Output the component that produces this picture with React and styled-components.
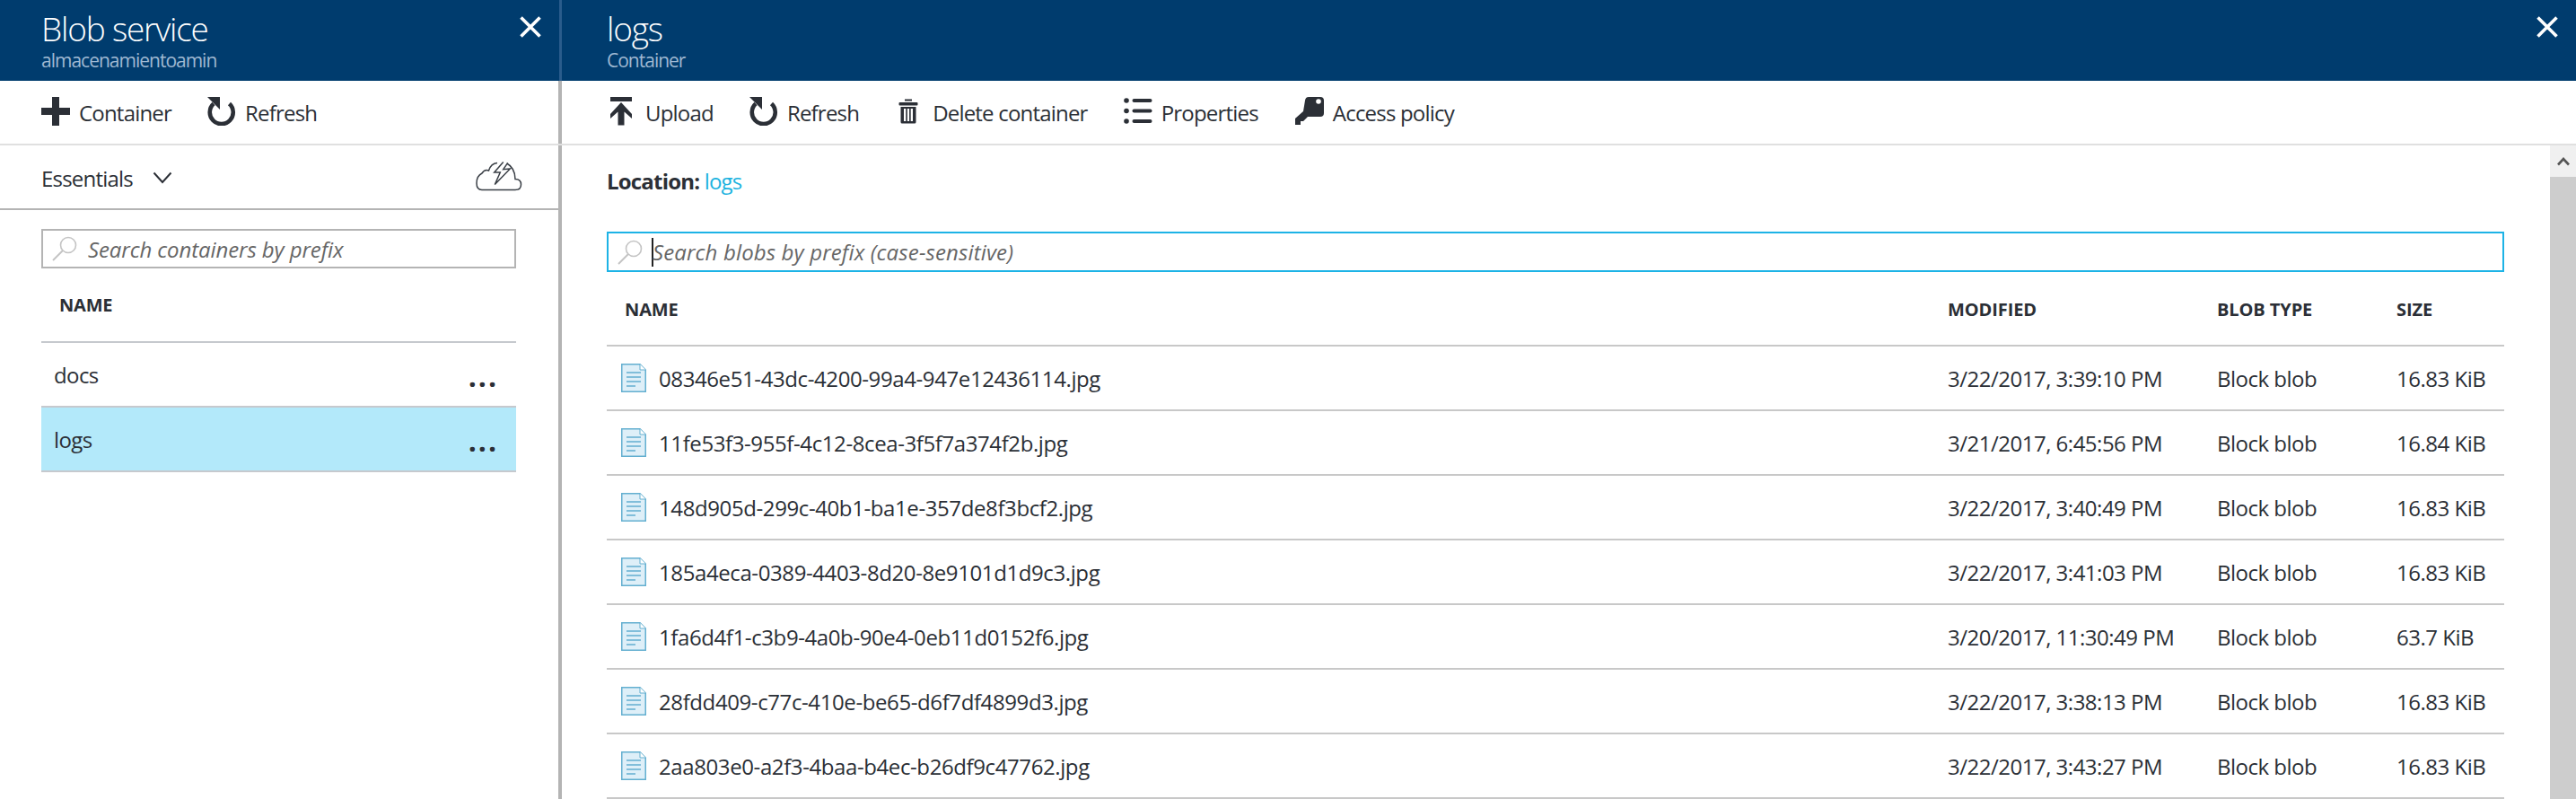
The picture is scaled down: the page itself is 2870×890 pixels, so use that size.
import React from 'react';
import styled, { createGlobalStyle } from 'styled-components';

const GlobalStyle = createGlobalStyle`
    html, body {
        margin: 0;
        padding: 0;
        background: #fff;
    }
    * {
        box-sizing: border-box;
    }
    body {
        font-family: 'Open Sans', 'Liberation Sans', sans-serif;
        color: #2b2f36;
    }
`;

const blobs = [
    ['08346e51-43dc-4200-99a4-947e12436114.jpg', '3/22/2017, 3:39:10 PM', '16.83 KiB'],
    ['11fe53f3-955f-4c12-8cea-3f5f7a374f2b.jpg', '3/21/2017, 6:45:56 PM', '16.84 KiB'],
    ['148d905d-299c-40b1-ba1e-357de8f3bcf2.jpg', '3/22/2017, 3:40:49 PM', '16.83 KiB'],
    ['185a4eca-0389-4403-8d20-8e9101d1d9c3.jpg', '3/22/2017, 3:41:03 PM', '16.83 KiB'],
    ['1fa6d4f1-c3b9-4a0b-90e4-0eb11d0152f6.jpg', '3/20/2017, 11:30:49 PM', '63.7 KiB'],
    ['28fdd409-c77c-410e-be65-d6f7df4899d3.jpg', '3/22/2017, 3:38:13 PM', '16.83 KiB'],
    ['2aa803e0-a2f3-4baa-b4ec-b26df9c47762.jpg', '3/22/2017, 3:43:27 PM', '16.83 KiB'],
];

function CloseIcon() {
    return (
        <svg width="24" height="24" viewBox="0 0 24 24">
            <path d="M1.5 1.5 L22.5 22.5 M22.5 1.5 L1.5 22.5" stroke="#fff" strokeWidth="3.6" fill="none" />
        </svg>
    );
}

function PlusIcon() {
    return (
        <svg width="32" height="32" viewBox="0 0 32 32">
            <path d="M12 0 H20 V12 H32 V20 H20 V32 H12 V20 H0 V12 H12 Z" fill="#2b2f36" />
        </svg>
    );
}

function RefreshIcon() {
    return (
        <svg width="32" height="32" viewBox="0 0 32 32">
            <path d="M24.5 7.5 A13 13 0 1 1 7 7.5" stroke="#2b2f36" strokeWidth="4.6" fill="none" />
            <path d="M0 0 H14 V14 Z" fill="#2b2f36" />
        </svg>
    );
}

function UploadIcon() {
    return (
        <svg width="28" height="32" viewBox="0 0 28 32">
            <rect x="2" y="0" width="24" height="5" fill="#2b2f36" />
            <path d="M14 6 L26 19 V24 L17.5 16.5 V31.5 H10.5 V16.5 L2 24 V19 Z" fill="#2b2f36" />
        </svg>
    );
}

function TrashIcon() {
    return (
        <svg width="24" height="28" viewBox="0 0 24 28">
            <rect x="8" y="0.5" width="8" height="2" fill="#2b2f36" />
            <rect x="1.5" y="4" width="21" height="3.5" rx="1" fill="#2b2f36" />
            <path d="M3.5 9 H20.5 V26 Q20.5 27.5 19 27.5 H5 Q3.5 27.5 3.5 26 Z M7 11 V25 H9.3 V11 Z M10.9 11 V25 H13.1 V11 Z M14.7 11 V25 H17 V11 Z" fill="#2b2f36" fillRule="evenodd" />
        </svg>
    );
}

function ListIcon() {
    return (
        <svg width="32" height="30" viewBox="0 0 32 30">
            <circle cx="3" cy="3" r="2.8" fill="#2b2f36" />
            <circle cx="3" cy="14.5" r="2.8" fill="#2b2f36" />
            <circle cx="3" cy="26" r="2.8" fill="#2b2f36" />
            <rect x="9.5" y="1" width="22" height="4" rx="2" fill="#2b2f36" />
            <rect x="9.5" y="12.5" width="22" height="4" rx="2" fill="#2b2f36" />
            <rect x="9.5" y="24" width="22" height="4" rx="2" fill="#2b2f36" />
        </svg>
    );
}

function KeyIcon() {
    return (
        <svg width="34" height="32" viewBox="0 0 34 32">
            <path d="M12 4 Q12.5 0 16 0 H29 Q33 0 33 4 V18 Q33 22 29 22 H15 L10 27 H7 V31 H1 V24 L10 16 Z" fill="#2b2f36" />
            <circle cx="27" cy="5" r="2.8" fill="#fff" />
        </svg>
    );
}

function CloudIcon() {
    return (
        <svg width="52" height="34" viewBox="0 0 52 34">
            <path d="M24 1.5 Q17 2 14.5 10 Q10 8 7 13 Q1 16 1 24 Q1 31.5 7 31.5 H44 Q50.5 31.5 50.5 25.5 Q50.5 19.5 44 19.5 Q44 7 34 1.5" stroke="#3a3f46" strokeWidth="1.5" fill="none" />
            <path d="M30.7 0.5 L20.7 12 H27.3 L21.3 25.5 L38.3 8 L30.7 8.7 L35.7 1.3" stroke="#3a3f46" strokeWidth="1.5" fill="#fff" />
        </svg>
    );
}

function SearchIcon() {
    return (
        <svg width="28" height="28" viewBox="0 0 28 28">
            <circle cx="18" cy="10" r="8.5" stroke="#c4c4c4" strokeWidth="1.6" fill="none" />
            <path d="M12 16 L1 27" stroke="#c4c4c4" strokeWidth="2" fill="none" />
        </svg>
    );
}

function FileIcon() {
    return (
        <svg width="28" height="32" viewBox="0 0 28 32">
            <path d="M0.75 0.75 H21 L27.25 7 V31.25 H0.75 Z" fill="#deeff8" stroke="#63afd0" strokeWidth="1.5" />
            <path d="M21 0.75 V7 H27.25" fill="#fff" stroke="#63afd0" strokeWidth="1" />
            <path d="M6 10 H22 M6 15 H22 M6 20 H22 M6 25 H16" stroke="#63afd0" strokeWidth="1.4" />
        </svg>
    );
}

function ToolButton({ icon, label, gap, push }) {
    return (
        <SCToolButton $gap={gap} $push={push}>
            {icon}
            <SCToolLabel>{label}</SCToolLabel>
        </SCToolButton>
    );
}

function BladeHeader({ title, subtitle, last }) {
    return (
        <SCHeader $last={last}>
            <div>
                <SCTitle>{title}</SCTitle>
                <SCSubtitle>{subtitle}</SCSubtitle>
            </div>
            <SCClose><CloseIcon /></SCClose>
        </SCHeader>
    );
}

function App() {
    return (
        <>
        <GlobalStyle />
        <SCPage>
            <SCLeftBlade>
                <BladeHeader title="Blob service" subtitle="almacenamientoamin" />
                <SCToolbar>
                    <ToolButton icon={<PlusIcon />} label="Container" gap={10} />
                    <ToolButton icon={<RefreshIcon />} label="Refresh" gap={10} />
                </SCToolbar>
                <SCEssentials>
                    <SCEssentialsLabel>
                        Essentials
                        <svg width="22" height="14" viewBox="0 0 22 14">
                            <path d="M1.5 1.5 L11 12 L20.5 1.5" stroke="#2b2f36" strokeWidth="2" fill="none" />
                        </svg>
                    </SCEssentialsLabel>
                    <CloudIcon />
                </SCEssentials>
                <SCLeftBody>
                    <SCSearch>
                        <SearchIcon />
                        <SCPlaceholder>Search containers by prefix</SCPlaceholder>
                    </SCSearch>
                    <SCListHead>NAME</SCListHead>
                    <SCListRow>
                        <span>docs</span>
                        <SCDots>...</SCDots>
                    </SCListRow>
                    <SCListRow $selected>
                        <span>logs</span>
                        <SCDots>...</SCDots>
                    </SCListRow>
                </SCLeftBody>
            </SCLeftBlade>

            <SCRightBlade>
                <BladeHeader title="logs" subtitle="Container" last />
                <SCToolbar $right>
                    <ToolButton icon={<UploadIcon />} label="Upload" gap={13} />
                    <ToolButton icon={<RefreshIcon />} label="Refresh" gap={10} />
                    <ToolButton icon={<TrashIcon />} label="Delete container" gap={15} push={3} />
                    <ToolButton icon={<ListIcon />} label="Properties" gap={10} />
                    <ToolButton icon={<KeyIcon />} label="Access policy" gap={9} />
                </SCToolbar>
                <SCRightBody>
                    <SCContent>
                        <SCLocation><b>Location:</b> <a>logs</a></SCLocation>
                        <SCSearch $focused>
                            <SearchIcon />
                            <SCCaret />
                            <SCPlaceholder $focused>Search blobs by prefix (case-sensitive)</SCPlaceholder>
                        </SCSearch>
                        <SCTable>
                            <SCTableHead>
                                <SCHeadCell $first>NAME</SCHeadCell>
                                <SCHeadCell>MODIFIED</SCHeadCell>
                                <SCHeadCell>BLOB TYPE</SCHeadCell>
                                <SCHeadCell>SIZE</SCHeadCell>
                            </SCTableHead>
                            {blobs.map(([name, modified, size]) => (
                                <SCTableRow key={name}>
                                    <SCNameCell>
                                        <FileIcon />
                                        <SCFileName>{name}</SCFileName>
                                    </SCNameCell>
                                    <SCCell>{modified}</SCCell>
                                    <SCCell>Block blob</SCCell>
                                    <SCCell>{size}</SCCell>
                                </SCTableRow>
                            ))}
                        </SCTable>
                    </SCContent>
                    <SCScrollbar>
                        <SCScrollButton>
                            <svg width="14" height="10" viewBox="0 0 14 10">
                                <path d="M1 8.5 L7 2 L13 8.5" stroke="#555" strokeWidth="2.6" fill="none" />
                            </svg>
                        </SCScrollButton>
                    </SCScrollbar>
                </SCRightBody>
            </SCRightBlade>
        </SCPage>
        </>
    );
}

const SCPage = styled.div`
    width: 2870px;
    height: 890px;
    display: flex;
    overflow: hidden;
    background-color: #fff;
`;

const SCLeftBlade = styled.div`
    width: 626px;
    height: 100%;
    flex-shrink: 0;
    display: flex;
    flex-direction: column;
    border-right: 4px solid #b4b4b4;
`;

const SCRightBlade = styled.div`
    flex: 1;
    min-width: 0;
    height: 100%;
    display: flex;
    flex-direction: column;
`;

const SCHeader = styled.div`
    height: 90px;
    flex-shrink: 0;
    background-color: #003c6e;
    display: flex;
    justify-content: space-between;
    align-items: flex-start;
    padding: 11px 20px 0 ${(p) => (p.$last ? '50px' : '46px')};
    margin-right: ${(p) => (p.$last ? '0' : '-4px')};
    border-right: ${(p) => (p.$last ? 'none' : '3px solid #2a5c8c')};
`;

const SCTitle = styled.div`
    font-size: 37px;
    font-weight: 300;
    line-height: 42px;
    color: #fff;
    letter-spacing: -1.2px;
`;

const SCSubtitle = styled.div`
    font-size: 21px;
    line-height: 28px;
    color: #9fb8d2;
    letter-spacing: -1px;
`;

const SCClose = styled.div`
    margin-top: 7px;
    display: flex;
`;

const SCToolbar = styled.div`
    height: 72px;
    flex-shrink: 0;
    display: flex;
    align-items: center;
    gap: 40px;
    padding-left: ${(p) => (p.$right ? '52px' : '46px')};
    padding-bottom: 3px;
    border-bottom: 2px solid #e0e0e0;
    ${(p) => (p.$right ? '' : 'margin-right: -4px;')}
`;

const SCToolButton = styled.div`
    display: flex;
    align-items: center;
    gap: ${(p) => p.$gap}px;
    margin-left: ${(p) => p.$push || 0}px;
`;

const SCToolLabel = styled.span`
    font-size: 24px;
    letter-spacing: -0.8px;
    white-space: nowrap;
    margin-top: 4px;
`;

const SCEssentials = styled.div`
    height: 72px;
    flex-shrink: 0;
    display: flex;
    justify-content: space-between;
    align-items: center;
    padding: 0 40px 0 46px;
    border-bottom: 2px solid #b4b4b4;
`;

const SCEssentialsLabel = styled.div`
    display: flex;
    align-items: center;
    gap: 22px;
    font-size: 24px;
    letter-spacing: -0.8px;
    margin-top: 2px;
`;

const SCLeftBody = styled.div`
    flex: 1;
    padding: 21px 47px 0 46px;
`;

const SCSearch = styled.div`
    height: ${(p) => (p.$focused ? '45px' : '44px')};
    display: flex;
    align-items: center;
    gap: ${(p) => (p.$focused ? '10px' : '12px')};
    padding-left: 10px;
    border: 2px solid ${(p) => (p.$focused ? '#1db3e6' : '#b4b4b4')};
`;

const SCPlaceholder = styled.span`
    font-size: 24px;
    font-style: italic;
    color: #666;
    letter-spacing: ${(p) => (p.$focused ? '0.13px' : '-0.1px')};
    white-space: nowrap;
`;

const SCCaret = styled.span`
    width: 2px;
    height: 32px;
    background-color: #222;
    margin-right: -11px;
`;

const SCListHead = styled.div`
    height: 83px;
    display: flex;
    align-items: center;
    padding-left: 20px;
    font-size: 20px;
    font-weight: 700;
    letter-spacing: -0.2px;
    border-bottom: 2px solid #c6c9ce;
`;

const SCListRow = styled.div`
    height: 72px;
    display: flex;
    justify-content: space-between;
    align-items: center;
    padding: 0 20px 0 14px;
    font-size: 24px;
    letter-spacing: -0.6px;
    background-color: ${(p) => (p.$selected ? '#b3e9fa' : 'transparent')};
    border-bottom: 2px solid #c6c9ce;
`;

const SCDots = styled.span`
    font-size: 32px;
    font-weight: 700;
    line-height: 1;
    letter-spacing: 2px;
    margin-top: 4px;
`;

const SCRightBody = styled.div`
    flex: 1;
    min-height: 0;
    display: flex;
`;

const SCContent = styled.div`
    flex: 1;
    min-width: 0;
    padding: 0 51px 0 50px;
`;

const SCLocation = styled.div`
    height: 96px;
    padding-top: 24px;
    font-size: 24px;
    line-height: 32px;
    letter-spacing: -0.8px;
    b {
        font-weight: 700;
    }
    a {
        color: #1db3e0;
    }
`;

const SCTable = styled.div`
    width: 2114px;
`;

const tableColumns = '1494px 300px 200px 120px';

const SCTableHead = styled.div`
    height: 83px;
    padding-top: 2px;
    display: grid;
    grid-template-columns: ${tableColumns};
    align-items: center;
    border-bottom: 2px solid #c8c8c8;
`;

const SCHeadCell = styled.div`
    padding-left: ${(p) => (p.$first ? '20px' : '0')};
    font-size: 20px;
    font-weight: 700;
    letter-spacing: -0.1px;
    white-space: nowrap;
`;

const SCTableRow = styled.div`
    height: 72px;
    display: grid;
    grid-template-columns: ${tableColumns};
    align-items: center;
    border-bottom: 2px solid #c8c8c8;
`;

const SCNameCell = styled.div`
    display: flex;
    align-items: center;
    gap: 14px;
    padding-left: 16px;
`;

const SCFileName = styled.span`
    font-size: 24px;
    letter-spacing: -0.4px;
    white-space: nowrap;
`;

const SCCell = styled.div`
    font-size: 24px;
    letter-spacing: -0.5px;
    white-space: nowrap;
`;

const SCScrollbar = styled.div`
    width: 29px;
    flex-shrink: 0;
    background-color: #cdcdcd;
`;

const SCScrollButton = styled.div`
    height: 35px;
    display: flex;
    justify-content: center;
    align-items: center;
    background-color: #f0f0f0;
`;

export default App;
